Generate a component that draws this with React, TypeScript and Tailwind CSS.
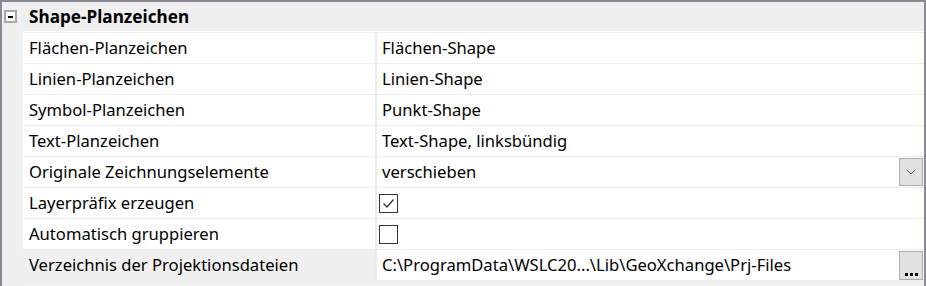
import { ReactNode } from 'react';

const font = { fontFamily: '"Noto Sans", "Open Sans", sans-serif' };

type Row = {
  label: string;
  value: ReactNode;
  button?: 'combo' | 'dots';
  active?: boolean;
};

const Check = ({ checked }: { checked: boolean }) => (
  <span className="w-[19px] h-[19px] -ml-[3px] border border-[#333333] bg-white flex items-center justify-center">
    {checked && (
      <svg width="13" height="13" viewBox="0 0 13 13">
        <path d="M1.5 6.5 L5 10 L11.5 2.5" fill="none" stroke="#333333" strokeWidth="1.3" />
      </svg>
    )}
  </span>
);

const rows: Row[] = [
  { label: 'Flächen-Planzeichen', value: 'Flächen-Shape' },
  { label: 'Linien-Planzeichen', value: 'Linien-Shape' },
  { label: 'Symbol-Planzeichen', value: 'Punkt-Shape' },
  { label: 'Text-Planzeichen', value: 'Text-Shape, linksbündig' },
  { label: 'Originale Zeichnungselemente', value: 'verschieben', button: 'combo' },
  { label: 'Layerpräfix erzeugen', value: <Check checked /> },
  { label: 'Automatisch gruppieren', value: <Check checked={false} /> },
  {
    label: 'Verzeichnis der Projektionsdateien',
    value: 'C:\\ProgramData\\WSLC20...\\Lib\\GeoXchange\\Prj-Files',
    button: 'dots',
    active: true,
  },
];

export default function App() {
  return (
    <div
      className="w-[926px] h-[286px] bg-[#f0f0f0] border-t-2 border-x-2 border-[#888b93] text-[16.6px] text-black overflow-hidden"
      style={font}
    >
      {/* Category header */}
      <div className="flex items-center h-[29px] bg-[#efefef]">
        <div className="w-[21px] flex pl-[2px]">
          <span className="w-[13px] h-[13px] border-2 border-[#a8a8a8] bg-white flex items-center justify-center">
            <span className="w-[5px] h-[2px] bg-black" />
          </span>
        </div>
        <span className="pl-[6px] font-bold text-[17.2px]">Shape-Planzeichen</span>
      </div>
      <div className="h-[1px] ml-[21px] bg-white" />
      <div className="h-[1px] ml-[21px] bg-[#ececec]" />

      {rows.map((r) => (
        <div key={r.label} className="flex h-[31px]">
          <div className="w-[21px] shrink-0" />
          <div
            className={`w-[352px] shrink-0 flex items-center pl-[6px] border-b border-[#ececec] ${
              r.active ? 'bg-[#f0f0f0]' : 'bg-white'
            }`}
          >
            {r.label}
          </div>
          <div className="w-[2px] bg-[#ececec] shrink-0" />
          <div className="flex-1 flex items-center pl-[5px] pr-[1px] bg-white border-b border-[#ececec]">
            <span className="flex-1 whitespace-nowrap">{r.value}</span>
            {r.button === 'combo' && (
              <span className="w-[24px] h-[28px] bg-[#e1e1e1] border border-[#adadad] flex items-center justify-center">
                <svg width="10" height="6" viewBox="0 0 10 6">
                  <path d="M0.5 0.5 L5 5 L9.5 0.5" fill="none" stroke="#606060" strokeWidth="1" />
                </svg>
              </span>
            )}
            {r.button === 'dots' && (
              <span className="w-[24px] h-[29px] bg-[#e1e1e1] border border-[#adadad] flex items-end justify-center pb-[3px] gap-[2px]">
                <span className="w-[3px] h-[3px] bg-black" />
                <span className="w-[3px] h-[3px] bg-black" />
                <span className="w-[3px] h-[3px] bg-black" />
              </span>
            )}
          </div>
        </div>
      ))}
    </div>
  );
}
